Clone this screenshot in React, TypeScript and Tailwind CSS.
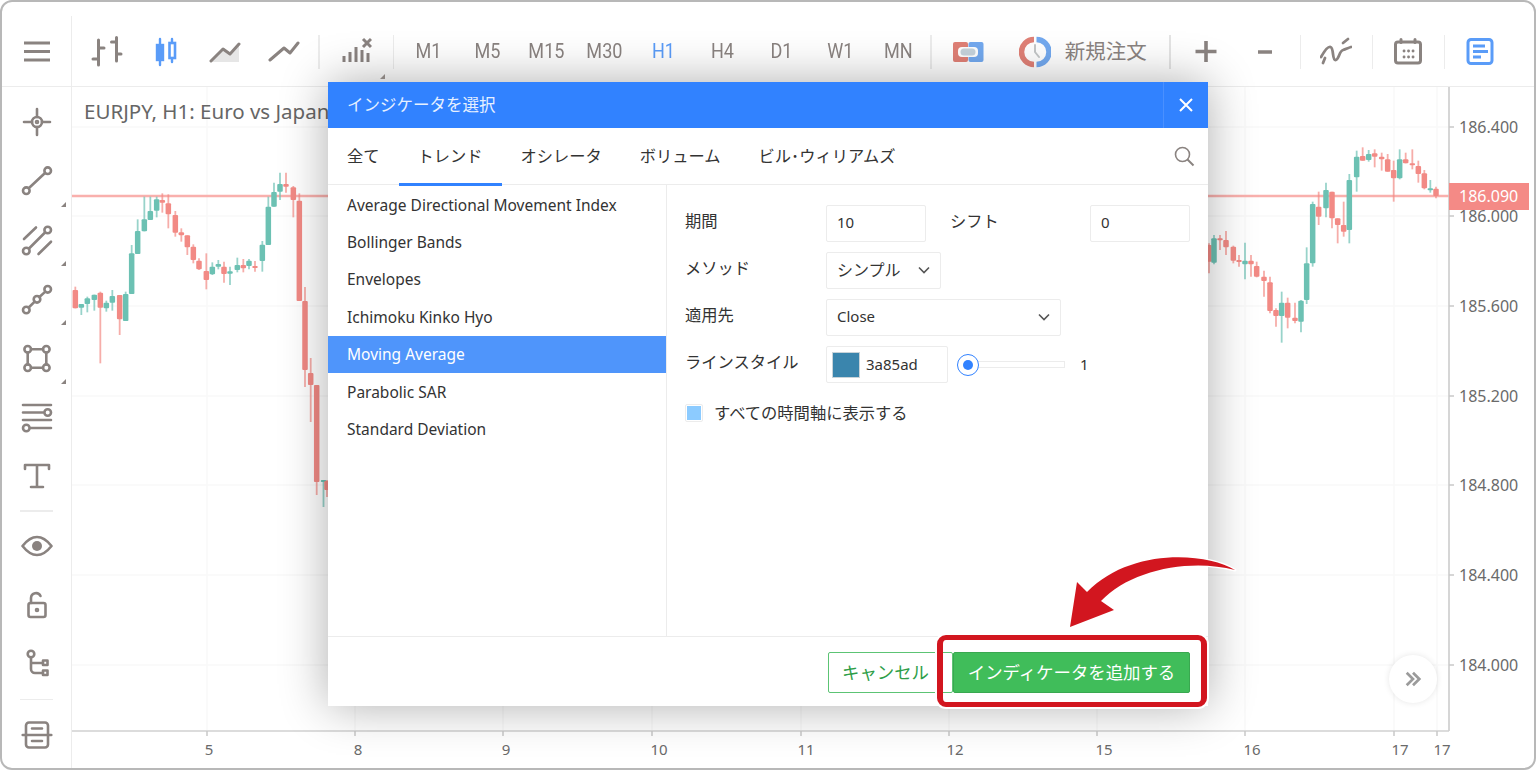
import React from 'react';

type C = [number, number, number, number, number, 'g' | 'r'];
const leftZ: C[] = [
  [16,390,445,380,445,'r'],[34,432,443,432,465,'g'],[52,415,432,410,457,'g'],[73,404,420,404,452,'g'],[91,398,443,395,610,'r'],[109,428,445,422,455,'g'],[127,408,428,390,452,'g'],[149,405,478,405,525,'r'],[167,402,483,395,483,'g'],[185,280,402,255,402,'g'],[203,213,282,178,282,'g'],[223,178,214,110,214,'g'],[241,153,180,110,180,'g'],[260,118,152,110,172,'g'],[277,120,128,100,158,'r'],[295,130,163,103,205,'r'],[316,165,218,153,230,'r'],[334,217,226,205,245,'r'],[352,226,262,226,285,'r'],[370,260,300,253,310,'r'],[387,302,328,295,330,'r'],[409,333,360,280,388,'r'],[427,320,343,307,345,'g'],[445,312,320,300,328,'g'],[462,320,342,305,368,'r'],[480,334,341,320,375,'g'],[502,315,330,293,337,'g'],[520,315,325,297,337,'r'],[537,302,318,297,328,'g'],[555,318,322,303,335,'r'],[577,254,303,243,335,'g'],[595,140,255,110,255,'g'],[612,96,140,68,140,'g'],[630,72,95,38,120,'g'],[648,72,80,38,98,'r'],[670,82,120,78,172,'r'],[688,122,423,100,423,'r'],
];
const rightZ: C[] = [
  [12,345,395,340,430,'r'],[27,325,398,315,403,'g'],[45,325,330,315,360,'r'],[63,330,352,303,375,'r'],[85,350,392,347,400,'r'],[102,390,395,375,410,'r'],[120,392,403,338,448,'g'],[138,392,403,375,440,'r'],[155,408,440,395,442,'r'],[177,440,453,422,500,'r'],[195,457,543,440,550,'r'],[213,540,558,535,590,'r'],[230,518,558,485,638,'g'],[248,518,563,503,595,'r'],[270,563,573,518,580,'r'],[288,512,575,510,607,'g'],[305,400,510,352,522,'g'],[323,222,400,215,410,'g'],[341,230,260,185,285,'r'],[363,180,235,158,262,'g'],[381,185,265,185,295,'r'],[398,265,285,265,340,'r'],[416,285,305,215,320,'r'],[433,150,300,132,340,'g'],[455,80,142,62,185,'g'],[473,78,92,52,92,'r'],[491,72,90,60,95,'g'],[509,70,80,58,112,'r'],[530,80,88,68,122,'r'],[548,88,125,72,125,'r'],[566,120,145,92,215,'r'],[584,88,145,58,148,'g'],[602,88,100,68,100,'r'],[622,100,104,58,118,'r'],[640,108,132,92,158,'r'],[658,130,175,120,178,'r'],[676,175,180,150,188,'g'],[693,176,198,170,205,'r'],
];
const conv = (list: C[], ox: number, oy: number): C[] =>
  list.map(([x, a, b, c, d, k]) => [ox + x / 3, oy + a / 3, oy + b / 3, oy + c / 3, oy + d / 3, k]);
const candles: C[] = [
  ...conv(leftZ, 70, 160),
  [305, 301, 370, 287, 387, 'r'],
  [310.7, 373, 385, 358, 422, 'r'],
  [316.7, 385, 482, 385, 495, 'r'],
  [323.5, 480, 482, 480, 507, 'g'],
  [327, 481, 490, 480, 497, 'r'],
  ...conv(rightZ, 1205, 130),
];

const prices: [string, number][] = [['186.400',127],['186.000',216],['185.600',306],['185.200',396],['184.800',485],['184.400',575],['184.000',665]];
const times: [string, number, number][] = [['5',207,209],['8',355,358],['9',503,506],['10',652,659],['11',801,806],['12',949,955],['15',1097,1104],['16',1245,1252],['17',1394,1400],['17',1437,1442]];

function Chart() {
  const green = '#6cc1b3';
  const red = '#f28a85';
  return (
    <svg viewBox="72 87 1462 680" className="w-[1462px] h-[680px] block" style={{ fontFamily: '"Noto Sans", sans-serif' }}>
      {prices.map(([, y]) => <line key={y} x1="72" x2="1449" y1={y} y2={y} stroke="#f8f8f8" strokeWidth="1.5" />)}
      {times.map(([, x], i) => <line key={i} x1={x} x2={x} y1="87" y2="730" stroke="#f8f8f8" strokeWidth="1.5" />)}
      <line x1="72" x2="1449" y1="196" y2="196" stroke="#f9b0ad" strokeWidth="2.500" />
      <g className="blur-[0.4px]">
        {candles.map(([x, a, b, c, d, k], i) => (
          <g key={i}>
            <line x1={x} x2={x} y1={c} y2={d} stroke={k === 'g' ? green : red} strokeOpacity="0.7" strokeWidth="1.8" />
            <rect x={x - 2.75} y={a} width="5.500" height={Math.max(b - a, 2)} rx="1" fill={k === 'g' ? green : red} />
          </g>
        ))}
      </g>
      <line x1="1449" x2="1449" y1="87" y2="731" stroke="#c9c9c9" strokeWidth="1.5" />
      <line x1="72" x2="1449" y1="731" y2="731" stroke="#d0d0d0" strokeWidth="1.5" />
      {prices.map(([p, y]) => (
        <g key={p}>
          <line x1="1449" x2="1454" y1={y} y2={y} stroke="#c9c9c9" strokeWidth="1.5" />
          <text x="1459" y={y + 5.5} fontSize="16" fill="#6a6a6a">{p}</text>
        </g>
      ))}
      <rect x="1449" y="183" width="80" height="27" fill="#f48a86" />
      <text x="1459" y="201.5" fontSize="16" fill="#fff">186.090</text>
      {times.map(([t, x, lx], i) => (
        <g key={i}>
          <line x1={x} x2={x} y1="731" y2="736" stroke="#c9c9c9" strokeWidth="1.5" />
          <text x={lx} y="755" fontSize="15" textAnchor="middle" fill="#6a6a6a">{t}</text>
        </g>
      ))}
      <text x="84" y="119" fontSize="20.500" fill="#666">EURJPY, H1: Euro vs Japan</text>
    </svg>
  );
}

const G = '#8a8380';
const B = '#5a9cf8';
function Ico({ children, w = 32 }: { children: React.ReactNode; w?: number }) {
  return (
    <svg viewBox={`0 0 ${w} 32`} width={w} height="32" fill="none" stroke={G} strokeWidth="2.6" strokeLinecap="round" strokeLinejoin="round">
      {children}
    </svg>
  );
}

const Div = () => <div className="w-[1.5px] h-[34px] bg-[#ececec] mt-[3px] shrink-0" />;

function TopBtn({ children, w = 'w-[59px]' }: { children: React.ReactNode; w?: string }) {
  return <div className={`${w} h-[40px] flex items-center justify-center shrink-0`}>{children}</div>;
}
function Period({ t, on }: { t: string; on?: boolean }) {
  return (
    <div className={`w-[58.8px] h-[40px] flex items-center justify-center shrink-0 text-[21px] scale-x-[0.86] ${on ? 'text-[#5a9cf8]' : 'text-[#8a8380]'}`} style={{ fontFamily: 'Roboto, sans-serif' }}>{t}</div>
  );
}

function TopBar() {
  return (
    <div className="h-[85px] flex border-b-[1.5px] border-[#ececec] shrink-0">
      <div className="w-[70px] shrink-0 border-r-[1.5px] border-[#ececec] mt-[14px] flex items-start justify-center pt-[21px]">
        <Ico><path d="M3 6h26M3 14.5h26M3 23h26" strokeLinecap="butt" strokeWidth="3" /></Ico>
      </div>
      <div className="flex-1 flex items-start pt-[30px] pl-[5px]">
        <TopBtn>
          <Ico>
            <path d="M7.500 4v25M7.500 23H2M7.500 12H13M25.500 1.500V25M25.500 6h-5M25.500 18H30" strokeWidth="3" />
          </Ico>
        </TopBtn>
        <TopBtn>
          <svg viewBox="0 0 32 32" width="32" height="32" fill="none" stroke={B} strokeWidth="2.4" strokeLinecap="round">
            <path d="M10 3v26" /><rect x="7" y="9" width="6" height="15" fill={B} /><path d="M22 3v23" /><rect x="19.5" y="7" width="5.5" height="15" fill="#fff" strokeWidth="2.6" />
          </svg>
        </TopBtn>
        <TopBtn>
          <Ico>
            <path d="M1 26l13-13 7 5 9-10v18z" fill="#e6e6e6" stroke="none" />
            <path d="M2 25l12-12 7 5 9-10" strokeWidth="3" />
          </Ico>
        </TopBtn>
        <TopBtn>
          <Ico><path d="M2 24l14-12 6 5 8-10" strokeWidth="3" /></Ico>
        </TopBtn>
        <div className="w-[5px] shrink-0" />
        <Div />
        <div className="w-[73px] h-[40px] flex items-center justify-center shrink-0">
          <Ico>
            <path d="M4 20v6M10 16v10M16 11v15M22 14v12M28 17v9" strokeWidth="3" strokeLinecap="butt" />
            <path d="M23 3l8 8M31 3l-8 8" strokeWidth="3" strokeLinecap="butt" />
          </Ico>
        </div>
        <Div />
        <div className="w-[5px] shrink-0" />
        {['M1','M5','M15','M30'].map(t => <Period key={t} t={t} />)}
        <Period t="H1" on />
        {['H4','D1','W1','MN'].map(t => <Period key={t} t={t} />)}
        <div className="w-[2px] shrink-0" />
        <Div />
        <TopBtn w="w-[72px]">
          <svg viewBox="0 0 32 24" width="32" height="24">
            <rect x="1" y="2" width="15" height="20" rx="2" fill="#e08076" />
            <rect x="16.5" y="2" width="15" height="20" rx="2" fill="#73a9ef" />
            <rect x="6" y="7" width="20" height="10" rx="4" fill="#fff" />
            <rect x="8.5" y="8.5" width="15" height="7" rx="3.5" fill="#c6d3dc" />
          </svg>
        </TopBtn>
        <div className="w-[6px] shrink-0" />
        <TopBtn w="w-[50px]">
          <svg viewBox="0 0 32 32" width="32" height="32" fill="none">
            <path d="M15 3.500a12.500 12.500 0 0 0 0 25" stroke="#e08076" strokeWidth="5.500" />
            <path d="M17.500 3.500a12.500 12.500 0 0 1 0 25" stroke="#73a9ef" strokeWidth="5.500" />
            <path d="M16 9v7l4 5" stroke="#c4c7c8" strokeWidth="2" strokeLinecap="round" />
          </svg>
        </TopBtn>
        <div className="h-[40px] flex items-start text-[20.5px] leading-[26px] text-[#8a8380] w-[109px] shrink-0 pl-[5px] mt-[5px]" style={{ fontFamily: '"Noto Sans CJK JP", sans-serif' }}>新規注文</div>
        <div className="w-[2px] h-[34px] bg-[#e4e4e4] mt-[3px] shrink-0" />
        <div className="w-[6px] shrink-0" />
        <TopBtn>
          <Ico><path d="M16 5v21M5.500 15.500h21" strokeWidth="3.6" strokeLinecap="butt" /></Ico>
        </TopBtn>
        <TopBtn>
          <Ico><path d="M9 16h14" strokeWidth="3.6" strokeLinecap="butt" /></Ico>
        </TopBtn>
        <div className="w-[5px] shrink-0" />
        <Div />
        <div className="w-[70.5px] h-[40px] flex items-center justify-center shrink-0">
          <Ico>
            <path d="M1 21C5 14 8 10 10.500 11C14 12 12 24 15.500 24C19 24 19 15 23 14C26 13 28 12 31 11" strokeWidth="2.800" />
            <path d="M3 27l2-5M23 7l5-4" strokeWidth="2.800" />
          </Ico>
        </div>
        <Div />
        <div className="w-[70.5px] h-[40px] flex items-center justify-center shrink-0">
          <Ico>
            <rect x="3.500" y="6" width="25" height="21" rx="2.500" strokeWidth="3" />
            <path d="M9 3.500v3M23 3.500v3" strokeWidth="3" />
            <path d="M12 15h.1M16.500 15h.1M21 15h.1M12 21h.1M16.500 21h.1M21 21h.1" strokeWidth="2.800" />
          </Ico>
        </div>
        <Div />
        <div className="w-[70.5px] h-[40px] flex items-center justify-center shrink-0">
          <svg viewBox="0 0 32 32" width="32" height="32" fill="none" stroke={B} strokeWidth="3">
            <rect x="4" y="3.500" width="24" height="24" rx="3" />
            <path d="M9 10h12M9 15.500h15M9 21h8" strokeWidth="2.800" />
          </svg>
        </div>
      </div>
    </div>
  );
}

function Side({ children, tri }: { children: React.ReactNode; tri?: boolean }) {
  return (
    <div className="relative h-[59px] flex items-center justify-center shrink-0">
      {children}
      {tri && <div className="absolute right-[5px] bottom-[3px] w-0 h-0 border-l-[5px] border-l-transparent border-b-[5px] border-b-[#8a8380]" />}
    </div>
  );
}

function SideBar() {
  return (
    <div className="w-[70px] shrink-0 border-r-[1.5px] border-[#ececec] pt-[5px] flex flex-col">
      <Side>
        <Ico><circle cx="16" cy="16" r="5" /><circle cx="16" cy="16" r="1" /><path d="M3 16h8M21 16h8M16 3v8M16 21v8" /></Ico>
      </Side>
      <Side tri>
        <Ico><circle cx="5.300" cy="25.700" r="3.300" /><circle cx="26.700" cy="5.700" r="3.300" /><path d="M8 23L24 8" /></Ico>
      </Side>
      <Side tri>
        <Ico><circle cx="5.300" cy="27" r="3.300" /><circle cx="26.700" cy="6" r="3.300" /><path d="M8 24.500L24 8.500M3 15L15 3.500M17.500 30L30 17.700" /></Ico>
      </Side>
      <Side tri>
        <Ico><circle cx="5.300" cy="27" r="3.300" /><circle cx="16" cy="16.300" r="3.300" /><circle cx="26.700" cy="6.300" r="3.300" /><path d="M7.700 24.500L13.700 18.600M18.400 14L24.300 8.600" /></Ico>
      </Side>
      <Side tri>
        <Ico><circle cx="6.700" cy="7.300" r="3.300" /><circle cx="25.300" cy="7.300" r="3.300" /><circle cx="6.700" cy="25.700" r="3.300" /><circle cx="25.300" cy="25.700" r="3.300" /><path d="M10 7.300h12M10 25.700h12M6.700 10.600v11.800M25.300 10.600v11.800" /></Ico>
      </Side>
      <Side>
        <Ico><path d="M2 4h28M2 11.500h20M2 19h28M10 27h20" /><circle cx="26.700" cy="11.500" r="3.300" /><circle cx="5.300" cy="27" r="3.300" /></Ico>
      </Side>
      <Side>
        <Ico><path d="M4 9V5h24v4M16 5v22M10 27h12" /></Ico>
      </Side>
      <div className="h-[1.5px] my-[5px] mx-[18px] bg-[#ececec] shrink-0" />
      <Side>
        <Ico><path d="M1.500 16C7 9 11 7 16 7s9 2 14.500 9C25 23 21 25 16 25S7 23 1.500 16z" /><circle cx="16" cy="16" r="5" fill={G} stroke="none" /></Ico>
      </Side>
      <Side>
        <Ico><rect x="7.500" y="14" width="17" height="14" rx="2" /><path d="M10 14V9a5 5 0 0 1 9.500-2" /><circle cx="16" cy="21" r="1" /></Ico>
      </Side>
      <Side>
        <Ico><circle cx="10" cy="6" r="3.300" /><path d="M10 9.500V21a4 4 0 0 0 4 4h7M10 15h11" /><rect x="22" y="12.500" width="4.500" height="4.500" /><rect x="22" y="22.500" width="4.500" height="4.500" /></Ico>
      </Side>
      <div className="h-[1.5px] my-[5px] mx-[18px] bg-[#ececec] shrink-0" />
      <Side>
        <Ico><rect x="5" y="3.500" width="22" height="25" rx="3" /><path d="M1.700 16h28.600M11 9.500h10M11 22h10" /></Ico>
      </Side>
    </div>
  );
}

const list = ['Average Directional Movement Index','Bollinger Bands','Envelopes','Ichimoku Kinko Hyo','Moving Average','Parabolic SAR','Standard Deviation'];
const tabs = ['全て','トレンド','オシレータ','ボリューム','ビル･ウィリアムズ'];

const Chevron = () => (
  <svg viewBox="0 0 12 8" width="12" height="8" fill="none" stroke="#555" strokeWidth="1.600"><path d="M1 1.500l5 5 5-5" /></svg>
);
const field = 'h-[37px] border-[1.5px] border-[#ececec] rounded-[2px] flex items-center px-[10px] pb-[2px] text-[15px] text-[#333] shrink-0 bg-white';
const label = 'w-[141px] pb-[4px] shrink-0';

function Dialog() {
  return (
    <div className="absolute left-[328px] top-[82px] w-[880px] h-[624px] bg-white shadow-[0_0_45px_rgba(0,0,0,0.32)] flex flex-col" style={{ fontFamily: '"Noto Sans", "Noto Sans CJK JP", sans-serif' }}>
      <div className="h-[46px] bg-[#3182ff] flex items-center shrink-0">
        <div className="flex-1 pl-[19px] text-[16.5px] text-[#e6f0ff]">インジケータを選択</div>
        <div className="w-[45px] h-full border-l border-[#4a90ff] flex items-center justify-center">
          <svg viewBox="0 0 14 14" width="14" height="14" stroke="#fff" strokeWidth="2"><path d="M1 1l12 12M13 1L1 13" /></svg>
        </div>
      </div>
      <div className="h-[57px] border-b-[1.5px] border-[#ececec] flex items-stretch shrink-0 relative">
        {tabs.map((t, i) => (
          <div key={t} className={`px-[19px] flex items-center text-[16.25px] text-[#333] border-b-[3px] pt-[2px] -mb-[1.5px] ${i === 1 ? 'border-[#3182ff]' : 'border-transparent'}`}>{t}</div>
        ))}
        <div className="absolute right-[13px] top-[17px]">
          <svg viewBox="0 0 22 22" width="22" height="22" fill="none" stroke="#8a8380" strokeWidth="1.600"><circle cx="9.500" cy="9.500" r="7" /><path d="M14.500 14.500l6 6" strokeWidth="2" /></svg>
        </div>
      </div>
      <div className="flex-1 flex min-h-0">
        <div className="w-[339px] shrink-0 border-r-[1.5px] border-[#ececec] pt-[1px]">
          {list.map((t, i) => (
            <div key={t} className={`h-[37.4px] pl-[19px] pt-[1px] flex items-center text-[15.5px] ${i === 4 ? 'bg-[#4f95fb] text-white' : 'text-[#333]'}`}>{t}</div>
          ))}
        </div>
        <div className="flex-1 pl-[18px] pt-[20px] text-[16.3px] text-[#333]">
          <div className="flex items-center mb-[10px]">
            <div className={label}>期間</div>
            <div className={`${field} w-[100px]`}>10</div>
            <div className="w-[164px] pb-[4px] pl-[24px] shrink-0">シフト</div>
            <div className={`${field} w-[100px]`}>0</div>
          </div>
          <div className="flex items-center mb-[10px]">
            <div className={label}>メソッド</div>
            <div className={`${field} w-[115px] justify-between !text-[16px]`}>シンプル<Chevron /></div>
          </div>
          <div className="flex items-center mb-[10px]">
            <div className={label}>適用先</div>
            <div className={`${field} w-[235px] justify-between`}>Close<Chevron /></div>
          </div>
          <div className="flex items-center">
            <div className={label}>ラインスタイル</div>
            <div className={`${field} w-[122px] !px-[5px] !pb-0 gap-[6px]`}>
              <div className="w-[28px] h-[26px] bg-[#3a85ad] border-[1.5px] border-[#c8d3d9] shrink-0" />3a85ad
            </div>
            <div className="relative ml-[9px] w-[109px] h-[22px] flex items-center">
              <div className="ml-[10px] w-[98px] h-[7px] border border-[#ececec]" />
              <div className="absolute left-0 top-0 w-[22px] h-[22px] rounded-full bg-white border-[1.5px] border-[#3182ff] flex items-center justify-center">
                <div className="w-[10px] h-[10px] rounded-full bg-[#3182ff]" />
              </div>
            </div>
            <div className="ml-[14px] text-[15px]">1</div>
          </div>
          <div className="flex items-center mt-[18px] gap-[11px]">
            <div className="w-[18px] h-[18px] border-[1.5px] border-[#ececec] rounded-[2px] flex items-center justify-center">
              <div className="w-[14px] h-[14px] bg-[#8ccbff]" />
            </div>
            すべての時間軸に表示する
          </div>
        </div>
      </div>
      <div className="h-[70px] border-t-[1.5px] border-[#ececec] flex items-start justify-end shrink-0 pt-[15px] pr-[18px]">
        <div className="w-[125px] h-[41px] border border-[#5cc474] rounded-[2px] text-[#2e9e48] text-[17.4px] flex items-center pl-[13px]">キャンセル</div>
        <div className="w-[237px] h-[41px] bg-[#40bd5a] border border-[#39a850] rounded-[2px] text-white text-[17.4px] flex items-center justify-center">インディケータを追加する</div>
      </div>
    </div>
  );
}

export default function App() {
  return (
    <div className="relative w-[1536px] h-[770px] bg-white overflow-hidden">
      <div className="w-full h-full border-2 border-[#b8b8b8] rounded-[12px] flex flex-col overflow-hidden bg-white">
        <TopBar />
        <div className="flex-1 flex min-h-0">
          <SideBar />
          <div className="flex-1 min-w-0"><Chart /></div>
        </div>
        <Dialog />
      </div>
      <div className="absolute left-[380px] top-[74px] w-0 h-0 border-l-[5px] border-l-transparent border-b-[5px] border-b-[#8a8380]" />
      <div className="absolute left-[1389px] top-[655px] w-[48px] h-[48px] rounded-full bg-white shadow-[0_0_6px_rgba(0,0,0,0.1)] flex items-center justify-center">
        <svg viewBox="0 0 20 20" width="18" height="18" fill="none" stroke="#9b9b9b" strokeWidth="3"><path d="M3 3l7 7-7 7M10 3l7 7-7 7" /></svg>
      </div>
      <div className="absolute left-[937px] top-[635px] w-[270px] h-[72px] rounded-[9px] border-x-[6px] border-y-[5px] border-[#d2161f] shadow-[0_0_0_2px_#ffffff]" />
      <svg className="absolute left-[1050px] top-[540px]" width="200" height="100" viewBox="1050 540 200 100">
        <path d="M1235 570C1205 552 1130 548 1087 592L1077 582L1070 627L1114 610L1101 601C1130 570 1190 558 1235 570Z" fill="#d2161f" stroke="#fff" strokeWidth="3" strokeLinejoin="round" paintOrder="stroke" />
      </svg>
    </div>
  );
}
